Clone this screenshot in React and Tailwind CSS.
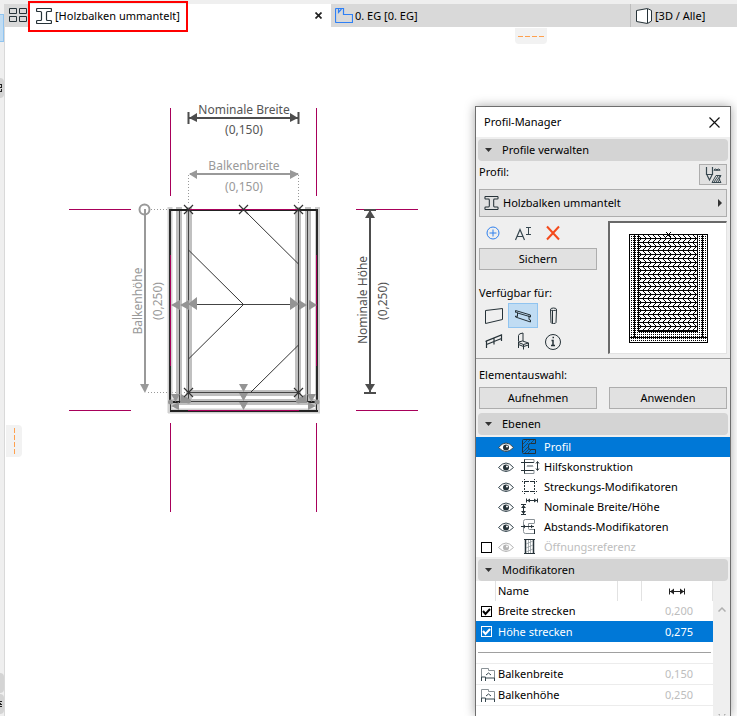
import React, { useState } from "react";

const IBeamIcon = ({ className }) => (
  <svg className={className} width="16" height="16" viewBox="0 0 16 16" fill="none" stroke="#263238" strokeWidth="1.200">
    <path d="M1.500.5h13q1 0 1 1v1q0 1-1 1h-3q-1 0-1 1v7q0 1 1 1h3q1 0 1 1v1q0 1-1 1h-13q-1 0-1-1v-1q0-1 1-1h3q1 0 1-1v-7q0-1-1-1h-3q-1 0-1-1v-1q0-1 1-1z" />
  </svg>
);

const EyeIcon = ({ active, dim }) => (
  <svg width="16" height="12" viewBox="0 0 16 12">
    <path d="M.5 6.500Q8-2.500 15.500 6.500Q8 14.500.5 6.500z" fill={active ? "#fff" : "none"} stroke={dim ? "#b5b5b5" : "#37474f"} strokeWidth="1" />
    <circle cx="8" cy="6.500" r="3" fill={dim ? "#b5b5b5" : "#263238"} />
    <circle cx="9" cy="5.500" r="1" fill="#fff" />
  </svg>
);

const LAYER_ICONS = {
  profile: (
    <>
      <path d="M2.500 1.500h12v4h-5q-2 0-2 2v2q0 2 2 2h5v4h-12q-1 0-1-1v-12q0-1 1-1z" />
      <path d="M2 6l4-4M2 10l5-5M2 14l5-5M7 15l3-3M4 15l4-4M10 5l3-3M7 4l2-2" strokeWidth=".7" />
    </>
  ),
  construction: (
    <>
      <path d="M3.500 1v15M0 4.500h13M0 12.500h13" />
      <path d="M3.500 1.500h9.500v3M13 12v3.500h-9.500" stroke="#8a9297" />
      <path d="M6 9l1-2 1 2 1-2 1 2 1-2 1 2" stroke="#8a9297" />
      <path d="M16.500 4v8M15 5.500l1.500-2 1.500 2M15 10.500l1.500 2 1.500-2" />
    </>
  ),
  stretch: (
    <>
      <path d="M3.500 4v10M13.500 4v10M3 3.500h11M3 13.500h11" strokeDasharray="2 1" />
      <path d="M3.500 1v5M1 3.500h5M13.500 1v5M11 3.500h5M3.500 11v5M1 13.500h5M13.500 11v5M11 13.500h5" strokeDasharray="1 1" />
    </>
  ),
  nominal: (
    <>
      <path d="M5.500 .5v4M16.500.5v4M6 2.500h10M0 6.500h5M0 16.500h5M2.500 7v9" />
      <path d="M6 2.500l3-2v4zM16 2.500l-3-2v4zM2.500 7l2.500 3h-5zM2.500 16l2.500-3h-5z" fill="#263238" stroke="none" />
    </>
  ),
  offset: (
    <>
      <path d="M13.500 5v-3.500h-9q-2 0-2 2v10q0 2 2 2h9v-4h-5q-1 0-1-1v-5h6" stroke="#8a9297" />
      <path d="M0 8.500h13M13.500 11v5" />
      <path d="M2 8.500l2-2v4zM12 8.500l-2-2v4z" fill="#263238" stroke="none" />
    </>
  ),
  opening: (
    <>
      <path d="M4.500 1v15M12.500 1v15" strokeWidth="1.500" />
      <path d="M3 1.500h11M3 15.500h11" />
      <path d="M7.500 2v13M9.500 2v13M5 6l7-3M5 10l7-3M5 14l7-3" stroke="#8a9297" strokeWidth=".7" />
    </>
  ),
};

const LAYERS = [
  { id: "profile", name: "Profil" },
  { id: "construction", name: "Hilfskonstruktion" },
  { id: "stretch", name: "Streckungs-Modifikatoren" },
  { id: "nominal", name: "Nominale Breite/Höhe" },
  { id: "offset", name: "Abstands-Modifikatoren" },
  { id: "opening", name: "Öffnungsreferenz", dim: true },
];

const ELEMENTS = [
  { id: "Wand", icon: <path d="M1.500 4.500l17-2v11l-17 4z" /> },
  {
    id: "Balken",
    icon: <path d="M2.500 6.500v-2l15 4.500v2l-2-.5M2.500 6l2 .5v4l-2-.5v1l15 5v-2l-1.500-.5v-4M4.500 7l12 3.500" />,
  },
  {
    id: "Stütze",
    icon: <path d="M7.500 3.500q0-1.500 3-1.500t3 1.500q0 1-3 1t-3-1l.5 13q0 1 2.500 1t2.500-1l.5-13M9.500 5v12" />,
  },
  {
    id: "Geländer",
    icon: <path d="M2.500 16v-7l15-6v6M2.500 12.500l15-6M10 12.500v-6M1.500 9.500l16-6.500" strokeWidth="1.200" />,
  },
  {
    id: "Objekt",
    icon: <path d="M5.500 9.500v-6q0-2 4.500-2.500v8M5.500 10l4-1 6 2v2l-5 1.500-5-2zM5.500 10.500l5 2 5-1.500M5.500 12v4M10.500 12.500v5M15.500 13v3" />,
  },
  {
    id: "Info",
    icon: (
      <>
        <circle cx="10" cy="10" r="7.500" />
        <path d="M8.500 8.500h1.500v5M8 13.500h4M9.500 5.500h1.500" strokeWidth="1.500" />
      </>
    ),
  },
];

const SectionHeader = ({ title }) => (
  <button type="button" className="mx-0.5 flex h-[22px] items-center gap-2.5 rounded-sm bg-[#d4d4d4] pl-[7px] text-left">
    <svg width="7" height="4" viewBox="0 0 7 4"><path d="M0 0h7L3.500 4z" fill="#333" /></svg>
    <span>{title}</span>
  </button>
);

const CheckBox = ({ id, label, inverted, checked, onChange }) => (
  <span className="grid size-[11px]">
    <input
      id={id}
      type="checkbox"
      aria-label={label}
      checked={checked}
      onChange={onChange}
      className={`col-start-1 row-start-1 size-[11px] appearance-none border ${inverted ? "border-white" : "border-black bg-white"}`}
    />
    {checked && (
      <svg className="pointer-events-none col-start-1 row-start-1" width="11" height="11" viewBox="0 0 11 11">
        <path d="M2 5l2.500 3L9 3" fill="none" stroke={inverted ? "#fff" : "#000"} strokeWidth="2" />
      </svg>
    )}
  </span>
);

const PushButton = ({ children }) => (
  <button type="button" className="h-[22px] w-full border border-[#adadad] bg-[#e1e1e1] text-center">{children}</button>
);

const Cross = ({ x, y }) => (
  <path d={`M${x - 4.5} ${y - 4.5}l9 9M${x + 4.5} ${y - 4.5}l-9 9`} stroke="#333" strokeWidth="1.200" />
);

const Drawing = () => (
  <svg className="shrink-0 font-['Noto_Sans',sans-serif]" width="360" height="416" viewBox="65 100 360 416" fill="none">
    {/* guide lines */}
    <path
      d="M170.500 108v88M316.500 108v88M69 209.500h62M356 209.500h62M69 410.500h62M356 410.500h62M170.500 423v89M316.500 423v89"
      stroke="#a8005a"
    />

    {/* nominal width */}
    <g stroke="#4d4d4d" strokeWidth="2">
      <path d="M189 118h110" />
      <path d="M188.500 112v12M298.500 112v12" />
      <path d="M189 118l8-5v9zM298 118l-8-5v9z" fill="#4d4d4d" stroke="none" />
    </g>
    <g fill="#555" fontSize="12" textAnchor="middle">
      <text x="244" y="114">Nominale Breite</text>
      <text x="244" y="134">(0,150)</text>
    </g>

    {/* beam width */}
    <path d="M190 174h108" stroke="#999" strokeWidth="2" />
    <path d="M189 174l8-4v9zM299 174l-9-4v9z" fill="#999" />
    <g fill="#999" fontSize="12" textAnchor="middle">
      <text x="244" y="170">Balkenbreite</text>
      <text x="244" y="191">(0,150)</text>
    </g>
    <path d="M188.500 175v30M298.500 175v30M151 209.500h18M148 392.500h38" stroke="#999" strokeDasharray="1 2" />

    {/* beam height */}
    <circle cx="144.500" cy="209.500" r="5" stroke="#999" strokeWidth="2" />
    <path d="M145 209v177" stroke="#999" strokeWidth="2" />
    <path d="M140 384h9l-4 9z" fill="#999" />
    <g fill="#999" fontSize="12" textAnchor="middle">
      <text transform="translate(142 301) rotate(-90)">Balkenhöhe</text>
      <text transform="translate(162 301) rotate(-90)">(0,250)</text>
    </g>

    {/* nominal height */}
    <path d="M370 210v183M364 210h12M364 393h12" stroke="#4d4d4d" strokeWidth="2" />
    <path d="M370 210l5 8h-10zM370 392l5-8h-10z" fill="#4d4d4d" />
    <g fill="#555" fontSize="12" textAnchor="middle">
      <text transform="translate(367 300) rotate(-90)">Nominale Höhe</text>
      <text transform="translate(387 301) rotate(-90)">(0,250)</text>
    </g>

    {/* modifier bands */}
    <g stroke="#c0c0c0" strokeWidth="6">
      <path d="M179 207v195M189 207v195M298 207v195M308 207v195" />
      <path d="M189 393h109M170 402h147" />
    </g>
    <path d="M170 207v206M317.500 207v206" stroke="#d0d0d0" strokeWidth="5" />
    <path d="M168 411h152" stroke="#d0d0d0" strokeWidth="5" />

    {/* profile edges */}
    <path d="M179.500 209v193M188.500 209v193M298.500 209v193M307.500 209v193M188 392.500h111M170 401.500h147" stroke="#444" />
    <path d="M169 210h149M170 402h10M308 402h10M170 411h148" stroke="#222" strokeWidth="2" />
    <path d="M170 209v194M317 209v194" stroke="#2b2b2b" strokeWidth="2" />
    <path d="M170.500 403v8M316.500 403v8" stroke="#2b2b2b" />
    <path d="M188 209.500h110M170.500 255v111M316.500 255v111M188 410.500h111" stroke="#a8005a" />

    {/* wood hatch */}
    <path d="M188 304.500h110" stroke="#444" />
    <path d="M188.500 250l55 54.500l-55 54.500M243.500 209.500l55 54.500M251 392l47.500-47" stroke="#333" />

    {/* modifier handles */}
    <g fill="#949494">
      <path d="M188 304l9-7v13zM180 305l9-5v10zM171 305l9-5v10z" />
      <path d="M299 304l-9-7v13zM307 305l-8-5v10zM317 305l-8-5v10z" />
      <path d="M239 384h9l-4.500 8zM239 393h9l-4.500 8zM239 402h9l-4.500 8z" />
      <path d="M171 394h9l-4.500 8zM307 394h9l-4.500 8zM181 394l7 4v5h-8zM306 394l-7 4v5h8zM171 406l8-4v8zM316 406l-8-4v8z" />
      <circle cx="170.500" cy="402" r="2.500" />
      <circle cx="188.500" cy="401" r="2.500" />
      <circle cx="298.500" cy="401" r="2.500" />
      <circle cx="317" cy="402" r="2.500" />
    </g>
    <Cross x={188.5} y={209.5} />
    <Cross x={243.5} y={209.5} />
    <Cross x={298.5} y={209.5} />
    <Cross x={188.5} y={392.5} />
    <Cross x={298.5} y={392.5} />
  </svg>
);

const Preview = () => (
  <div className="flex h-[133px] w-[119px] items-center justify-center border border-t-2 border-l-2 border-[#e3e3e3] border-t-[#696969] border-l-[#696969] bg-white">
    <svg width="80" height="112" viewBox="0 0 80 112" fill="none" shapeRendering="crispEdges">
      <defs>
        <pattern id="dots" width="2" height="2" patternUnits="userSpaceOnUse">
          <path d="M1 0h1v1h-1z" fill="#000" />
        </pattern>
        <pattern id="wood" width="5" height="8" patternUnits="userSpaceOnUse">
          <path d="M0 2h5v1h-5zM0 6h5v1h-5z" fill="#000" />
          <path d="M0 3h1v1h-1zM1 4h1v1h-1zM2 5h1v1h-1zM2 7h1v1h-1zM1 0h1v1h-1zM0 1h1v1h-1z" fill="#000" />
        </pattern>
      </defs>
      <rect x="1" y="2" width="78" height="109" fill="url(#dots)" />
      <rect x="10" y="2" width="60" height="98" fill="#fff" />
      <rect x="10" y="2" width="60" height="98" fill="url(#wood)" />
      <path d="M1.500 2.500h78v108h-78zM6.500 2v103M10.500 2v98M69.500 2v98M74.500 2v103M10 99.500h60M2 105.500h77" stroke="#000" />
      <path d="M38 0l5 5M43 0l-5 5" stroke="#000" />
    </svg>
  </div>
);

const MODIFIER_CELL = "h-[21px] p-0 font-normal";

const Palette = () => {
  const [element, setElement] = useState("Balken");
  const [layer, setLayer] = useState("profile");
  const [opening, setOpening] = useState(false);
  const [width, setWidth] = useState(true);
  const [height, setHeight] = useState(true);

  return (
    <aside className="mt-[79px] mr-1.5 ml-auto flex w-64 shrink-0 flex-col border border-b-0 border-[#6e6e6e] bg-[#efefef] shadow-[0_0_10px_rgba(0,0,0,0.35)]">
      <div className="flex h-[30px] shrink-0 items-center justify-between bg-white pr-2.5 pl-2">
        <h2>Profil-Manager</h2>
        <button type="button" aria-label="Schließen">
          <svg width="11" height="11" viewBox="0 0 11 11"><path d="M.5.5l10 10M10.500.5l-10 10" stroke="#111" strokeWidth="1.200" /></svg>
        </button>
      </div>

      <div className="flex shrink-0 flex-col pt-0.5">
        <SectionHeader title="Profile verwalten" />
        <div className="flex flex-col px-[3px]">
          <div className="flex h-7 justify-between pt-[3px]">
            <span>Profil:</span>
            <button type="button" aria-label="Stifte und Schraffuren" className="flex h-[21px] w-7 items-center justify-center border border-[#adadad] bg-[#e1e1e1]">
              <svg width="18" height="18" viewBox="0 0 18 18" fill="none" stroke="#37474f">
                <path d="M2.500 1v7.500h6V1M3 9l2.500 5L8 9" strokeWidth="1.200" />
                <path d="M10 5q1.500-4 3 0q1.500-4 3 0M10 3q2 3 3 0q2 3 3 0" />
                <path d="M8 16.500l4-7h5l-2 3.500 2 3.500zM10 16l4-6M12 16l4-6M14 16l2-3" />
              </svg>
            </button>
          </div>
          <button type="button" className="flex h-7 items-center gap-1 border border-[#adadad] bg-[#e1e1e1] px-1">
            <IBeamIcon className="h-3.5 w-[15px]" />
            <span>Holzbalken ummantelt</span>
            <svg className="ml-auto" width="4" height="8" viewBox="0 0 4 8"><path d="M0 0v8l4-4z" fill="#333" /></svg>
          </button>

          <div className="flex justify-between pt-1">
            <div className="flex w-[118px] flex-col">
              <div className="flex h-[27px] items-start gap-3 pt-1 pl-1.5">
                <button type="button" aria-label="Neu">
                  <svg width="16" height="16" viewBox="0 0 16 16" fill="none" stroke="#2f80ed"><circle cx="8" cy="8" r="6" /><path d="M8 4.500v7M4.500 8h7" /></svg>
                </button>
                <button type="button" aria-label="Umbenennen">
                  <svg width="20" height="16" viewBox="0 0 20 16" fill="none" stroke="#37474f">
                    <path d="M2.500 15L7 4.500 11.500 15M4 11.500h6" strokeWidth="1.200" />
                    <path d="M13 2.500h5M15.500 3v6M13 9.500h5" />
                  </svg>
                </button>
                <button type="button" aria-label="Löschen">
                  <svg width="16" height="16" viewBox="0 0 16 16"><path d="M2 1.500l12 13M14 1.500l-12 13" stroke="#f44a1c" strokeWidth="2" /></svg>
                </button>
              </div>
              <PushButton>Sichern</PushButton>
              <p className="flex h-[33px] items-end pb-0.5">Verfügbar für:</p>
              <div className="grid w-[89px] grid-cols-[29px_30px_30px] gap-y-px">
                {ELEMENTS.map((item) => (
                  <button
                    key={item.id}
                    type="button"
                    aria-label={item.id}
                    aria-pressed={element === item.id}
                    onClick={() => setElement(item.id)}
                    className={`flex h-[25px] items-center justify-center border ${element === item.id ? "border-[#90c4f0] bg-[#c0dcf3]" : "border-transparent"}`}
                  >
                    <svg width="20" height="20" viewBox="0 0 20 20" fill="none" stroke="#263238">{item.icon}</svg>
                  </button>
                ))}
              </div>
            </div>
            <Preview />
          </div>
        </div>
      </div>

      <div className="mt-1 flex shrink-0 flex-col border-t border-[#a0a0a0] px-[3px] pt-1.5">
        <p className="h-[22px] leading-5">Elementauswahl:</p>
        <div className="grid grid-cols-2 gap-3">
          <PushButton>Aufnehmen</PushButton>
          <PushButton>Anwenden</PushButton>
        </div>
      </div>

      <div className="flex shrink-0 flex-col pt-1">
        <SectionHeader title="Ebenen" />
        <ul className="mt-0.5 bg-white">
          {LAYERS.map((item) => {
            const active = layer === item.id;
            return (
              <li key={item.id} className={`flex h-5 items-center ${active ? "bg-[#0078d7] text-white" : item.dim ? "text-[#bdbdbd]" : ""}`}>
                <span className="flex w-[22px] justify-start pl-[5px]">
                  {item.dim && <CheckBox label={item.name} checked={opening} onChange={() => setOpening(!opening)} />}
                </span>
                <button type="button" aria-label="Sichtbarkeit"><EyeIcon active={active} dim={item.dim} /></button>
                <button type="button" onClick={() => setLayer(item.id)} className="flex flex-1 items-center gap-1 pl-[7px]">
                  <svg width="19" height="18" viewBox="0 0 19 18" fill="none" stroke="#263238">{LAYER_ICONS[item.id]}</svg>
                  <span>{item.name}</span>
                </button>
              </li>
            );
          })}
        </ul>
      </div>

      <div className="flex min-h-0 flex-1 flex-col pt-0.5">
        <SectionHeader title="Modifikatoren" />
        <div className="flex min-h-0 flex-1 bg-white">
          <table className="h-fit w-full flex-1 table-fixed border-separate border-spacing-0 text-left">
            <colgroup>
              <col className="w-5" />
              <col />
              <col className="w-6" />
              <col className="w-[71px]" />
            </colgroup>
            <thead>
              <tr>
                <th className="h-5 border-r border-[#e2e2e2] p-0"></th>
                <th className="border-r border-[#e2e2e2] p-0 pl-0.5 font-normal">Name</th>
                <th className="border-r border-[#e2e2e2] p-0"></th>
                <th aria-label="Maß" className="border-r border-[#e2e2e2] p-0">
                  <svg className="mx-auto" width="16" height="7" viewBox="0 0 16 7" stroke="#222" fill="none">
                    <path d="M.5.5v6M15.500.5v6M1 3.500h14" />
                    <path d="M1 3.500l4-3v6zM15 3.500l-4-3v6z" fill="#222" stroke="none" />
                  </svg>
                </th>
              </tr>
            </thead>
            <tbody>
              <tr>
                <td className="h-5 p-0">
                  <div className="pl-[5px]"><CheckBox id="breite" checked={width} onChange={() => setWidth(!width)} /></div>
                </td>
                <td className="h-5 p-0"><label htmlFor="breite" className="pl-0.5">Breite strecken</label></td>
                <td className="h-5 p-0"></td>
                <td className="h-5 p-0 pr-5 text-right text-[#bdbdbd]">0,200</td>
              </tr>
              <tr className="bg-[#0078d7] text-white">
                <td className={MODIFIER_CELL}>
                  <div className="pl-[5px]"><CheckBox id="hoehe" inverted checked={height} onChange={() => setHeight(!height)} /></div>
                </td>
                <td className={MODIFIER_CELL}><label htmlFor="hoehe" className="pl-0.5">Höhe strecken</label></td>
                <td className={MODIFIER_CELL}></td>
                <td className={`${MODIFIER_CELL} pr-5 text-right`}>0,275</td>
              </tr>
              <tr>
                <td colSpan="4" className="h-[22px] border-b border-[#ececec] p-0"><hr className="mx-0.5 border-[#a0a0a0]" /></td>
              </tr>
              {[["Balkenbreite", "0,150"], ["Balkenhöhe", "0,250"]].map(([name, value]) => (
                <tr key={name} className="*:border-b *:border-[#ececec]">
                  <td className={MODIFIER_CELL}>
                    <svg className="ml-[5px]" width="15" height="15" viewBox="0 0 15 15" fill="none" stroke="#37474f">
                      <path d="M.5 10v-8.500h7v2h6v8" stroke="#8a9297" />
                      <path d="M.5 14v-4h4v4M13.500 14v-3h-9M5 8l2.500-2L10 8" />
                    </svg>
                  </td>
                  <td className={MODIFIER_CELL}><span className="pl-0.5">{name}</span></td>
                  <td className={MODIFIER_CELL}></td>
                  <td className={`${MODIFIER_CELL} pr-5 text-right text-[#bdbdbd]`}>{value}</td>
                </tr>
              ))}
            </tbody>
          </table>
          <div className="flex w-[17px] shrink-0 flex-col items-center justify-between bg-[#efefef] pt-[26px]">
            <svg width="8" height="5" viewBox="0 0 8 5" fill="none"><path d="M.5 4.500l3.500-3.500 3.500 3.500" stroke="#b0b0b0" strokeWidth="1.500" /></svg>
            <svg width="8" height="2" viewBox="0 0 8 2"><path d="M0 0h2v2M8 0h-2v2" fill="#b0b0b0" /></svg>
          </div>
        </div>
      </div>
    </aside>
  );
};

const TabBar = () => (
  <nav className="flex h-[23px] shrink-0 bg-[#d9d9d9]">
    <button type="button" aria-label="Tab-Übersicht" className="flex w-[25px] shrink-0 items-center pl-1">
      <svg width="19" height="15" viewBox="0 0 19 15" fill="none" stroke="#263238"><path d="M.5.5h7v5h-7zM10.500.5h7v5h-7zM.5 8.500h7v5h-7zM10.500 8.500h7v5h-7z" /></svg>
    </button>
    <div className="relative z-10 flex w-[301px] shrink-0 items-center bg-white">
      <span className="absolute -top-[3px] -left-[2px] h-[31px] w-40 border-2 border-[#f00]"></span>
      <button type="button" className="flex items-center gap-[3px] pl-1.5"><IBeamIcon />[Holzbalken ummantelt]</button>
      <button type="button" aria-label="Tab schließen" className="mr-[9px] ml-auto">
        <svg width="7" height="7" viewBox="0 0 7 7"><path d="M.5.5l6 6M6.500.5l-6 6" stroke="#222" strokeWidth="1.700" /></svg>
      </button>
    </div>
    <button type="button" className="flex flex-1 items-center gap-0.5 pl-1">
      <svg width="18" height="15" viewBox="0 0 18 15" fill="none" stroke="#2f80f5" strokeWidth="1.200"><path d="M1.500.5h7v6h9v8h-16q-1 0-1-1v-12q0-1 1-1zM3.500 1v3.500l3-3.500" /></svg>
      0. EG [0. EG]
    </button>
    <button type="button" className="flex w-[107px] shrink-0 items-center gap-[3px] border-l border-[#bdbdbd] pl-[5px]">
      <svg width="16" height="16" viewBox="0 0 16 16" fill="#fff" stroke="#263238"><path d="M.5 2.500L11.500.5l4 2v10.500l-4 2.500-11-2zM11.500 1v14" /></svg>
      [3D / Alle]
    </button>
  </nav>
);

export default function App() {
  return (
    <div className="flex h-screen flex-col overflow-hidden bg-[#efefef] pt-1 font-['Noto_Sans','Open_Sans',sans-serif] text-[11px] leading-4 text-black">
      <div className="flex min-h-0 flex-1">
        <div className="flex w-[5px] shrink-0 flex-col border-r border-[#d9d9d9] pt-2.5">
          <span className="h-7 border border-l-0 border-[#90c4f0] bg-[#c0dcf3]"></span>
          <span className="mt-9 flex h-5 items-center rounded-r-sm bg-[#d4d4d4]">
            <svg width="2" height="8" viewBox="0 0 2 8"><path d="M0 0h2v1h-2zM1 1h1v2h-1zM0 3h2v1h-2zM1 5h1v2h-1zM0 7h2v1h-2z" fill="#222" /></svg>
          </span>
          <span className="mt-auto h-5 rounded-r-sm bg-[#d4d4d4]"></span>
          <span className="mt-px mb-0.5 flex h-5 items-center rounded-r-sm bg-[#d4d4d4]">
            <svg width="2" height="6" viewBox="0 0 2 6"><path d="M0 0h2v1h-2zM0 2h1v1h-1zM0 3h2v1h-2zM0 5h2v1h-2z" fill="#222" /></svg>
          </span>
        </div>
        <div className="flex min-w-0 flex-1 flex-col">
          <TabBar />
          <main className="relative flex min-h-0 flex-1 bg-white pl-[60px]">
            <div className="absolute top-px left-[510px] flex h-4 w-8 items-center justify-center rounded-b bg-[#f2f2f2]">
              <svg width="26" height="1"><path d="M0 .5h26" stroke="#ffa04d" strokeDasharray="5 2" /></svg>
            </div>
            <div className="absolute top-[398px] left-px flex h-8 w-4 items-center justify-center rounded-r bg-[#f2f2f2]">
              <svg width="1" height="26"><path d="M.5 0v26" stroke="#ffa04d" strokeDasharray="5 2" /></svg>
            </div>
            <div className="pt-[73px]"><Drawing /></div>
            <Palette />
          </main>
        </div>
      </div>
    </div>
  );
}
